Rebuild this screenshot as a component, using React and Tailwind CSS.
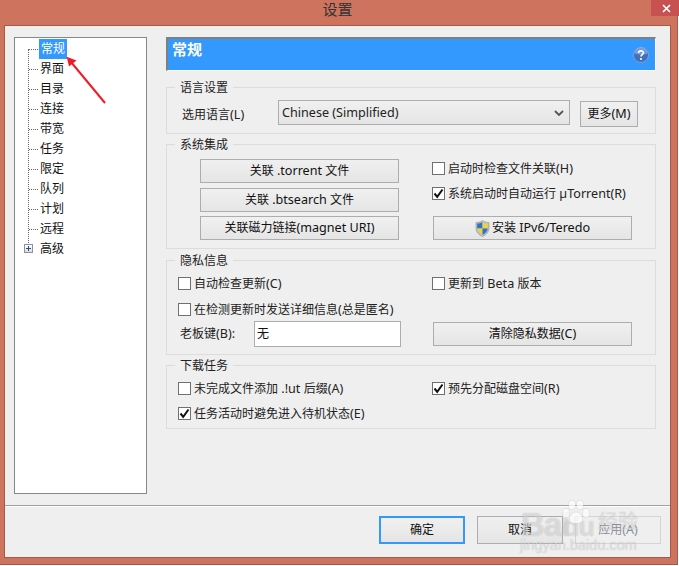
import React from "react";

const cjk = { fontFamily: '"Noto Sans", "Noto Sans CJK SC", sans-serif' };

function Txt({ children }) {
  const parts = String(children).split(/([\u0000-\u024F]+)/).filter(Boolean);
  return (
    <span className="whitespace-pre inline-block">
      {parts.map((p, i) =>
        /^[\u0000-\u024F]+$/.test(p) ? (
          <span key={i} className="text-[12.6px]">{p}</span>
        ) : (
          <span key={i}>{p}</span>
        )
      )}
    </span>
  );
}

function Btn({ className = "", children }) {
  return (
    <div className={"flex items-center justify-center gap-0.5 border bg-gradient-to-b text-[12px] leading-none " + className}>
      {children}
    </div>
  );
}

const stdBtn = "h-6 w-[199px] border-[#adadad] from-[#f0f0f0] to-[#e5e5e5] text-[#111]";

function Check({ checked, label, className = "" }) {
  return (
    <div className={"flex items-center gap-[3px] h-[13px] text-[12px] leading-none text-[#222] whitespace-nowrap " + className}>
      <span className="w-[13px] h-[13px] border border-[#707070] bg-white flex items-center justify-center shrink-0">
        {checked && (
          <svg width="11" height="11" viewBox="0 0 11 11">
            <path d="M1.5 5.5 L4.2 8.8 L9.5 1.5" fill="none" stroke="#111" strokeWidth="2" />
          </svg>
        )}
      </span>
      <span className="mt-[1px]"><Txt>{label}</Txt></span>
    </div>
  );
}

function Group({ title, className = "", children }) {
  return (
    <div className={"relative border border-[#dcdcdc] " + className}>
      <span className="absolute left-[8px] top-[-7px] bg-[#efefef] px-[5px] text-[12px] leading-[14px] text-[#222]">{title}</span>
      {children}
    </div>
  );
}

const treeItems = ["界面", "目录", "连接", "带宽", "任务", "限定", "队列", "计划", "远程"];

function Tree() {
  return (
    <div className="w-[133px] h-[457px] border border-[#828790] bg-white text-[12px] leading-none text-[#111] shrink-0 pt-[1px] pl-[23px]">
      <div className="relative">
        <span className="absolute left-[-10px] top-[10px] h-[200px] border-l border-dotted border-[#666]" />
        <div className="flex items-center h-5">
          <span className="w-[9px] border-t border-dotted border-[#666] -ml-[9px] mr-[1px]" />
          <span className="bg-[#3399ff] text-white h-5 w-[28px] flex items-center justify-center"><Txt>常规</Txt></span>
        </div>
        {treeItems.map((t) => (
          <div key={t} className="flex items-center h-5">
            <span className="w-[9px] border-t border-dotted border-[#666] -ml-[9px] mr-[2px]" />
            <Txt>{t}</Txt>
          </div>
        ))}
        <div className="flex items-center h-5 relative">
          <span className="absolute left-[-14px] top-[5px] w-[9px] h-[9px] border border-[#919191] bg-gradient-to-b from-white to-[#dcdcdc] flex items-center justify-center">
            <svg width="7" height="7" viewBox="0 0 7 7"><path d="M1 3.5H6M3.5 1V6" stroke="#2f4a8c" strokeWidth="1" /></svg>
          </span>
          <span className="ml-[2px]"><Txt>高级</Txt></span>
        </div>
      </div>
    </div>
  );
}

function Shield() {
  return (
    <svg width="15" height="17" viewBox="0 0 15 17">
      <path d="M7.5 0.5 C5.5 2 3 2.5 1 2.5 V8 C1 12 4 15 7.5 16.5 C11 15 14 12 14 8 V2.5 C12 2.5 9.5 2 7.5 0.5Z" fill="#b9c0c6" stroke="#8a949c" strokeWidth="0.6" />
      <path d="M7.5 2 V8.5 H2.2 V3.6 C4 3.5 6 3 7.5 2Z" fill="#2a74c9" />
      <path d="M7.5 2 V8.5 H12.8 V3.6 C11 3.5 9 3 7.5 2Z" fill="#f6cf3c" />
      <path d="M2.3 8.5 H7.5 V14.8 C4.8 13.5 2.6 11.5 2.3 8.5Z" fill="#f6cf3c" />
      <path d="M12.7 8.5 H7.5 V14.8 C10.2 13.5 12.4 11.5 12.7 8.5Z" fill="#2a74c9" />
    </svg>
  );
}

function Help() {
  return (
    <svg width="16" height="16" viewBox="0 0 16 16">
      <circle cx="8" cy="8" r="7.5" fill="#3f6fbd" stroke="#7f9fd6" />
      <path d="M1.5 6.5 A6.5 6.5 0 0 1 14.5 6.5 C11 8 5 8 1.5 6.5Z" fill="#8fb0e4" opacity="0.7" />
      <path d="M5.6 6 C5.6 3.2 10.4 3.2 10.4 5.8 C10.4 7.6 8 7.6 8 9.6" fill="none" stroke="#fff" strokeWidth="1.6" />
      <circle cx="8" cy="12" r="1.1" fill="#fff" />
    </svg>
  );
}

export default function App() {
  return (
    <div className="relative w-[679px] h-[566px] overflow-hidden bg-white" style={cjk}>
      <div className="flex flex-col w-[678px] h-[565px] bg-[#cd735e] border-b border-r border-[#a85a48]">
        {/* title bar */}
        <div className="relative h-[25px] shrink-0 w-[675px] flex justify-center pt-[2px]">
          <span className="text-[15px] leading-none text-[#333]">设置</span>
          <div className="absolute right-[-7px] top-0 w-[31px] h-[16px] bg-[#c75050] flex items-center justify-center">
            <svg width="9" height="9" viewBox="0 0 9 9"><path d="M1 1L8 8M8 1L1 8" stroke="#fff" strokeWidth="1.7" /></svg>
          </div>
        </div>
        {/* client */}
        <div className="ml-[4px] w-[667px] h-[533px] border border-[#a85a48] bg-[#efefef] flex flex-col shrink-0">
          <div className="flex h-[479px] pl-[9px] pt-[11px] gap-[19px]">
            <Tree />
            <div className="w-[490px] flex flex-col">
              <div className="h-[34px] border-t-2 border-l-2 border-t-[#808080] border-l-[#808080] border-b border-r border-b-white border-r-white bg-[#3399ff] flex items-center justify-between pl-[4px] pr-[6px]">
                <span className="text-[15px] font-bold leading-none text-white -mt-[11px]">常规</span>
                <span className="mt-[1px]"><Help /></span>
              </div>

              <Group title="语言设置" className="h-[47px] mt-[16px] flex items-start pl-[15px] pt-[12px]">
                <span className="text-[12px] leading-none text-[#222] w-[96px] mt-[9px]"><Txt>选用语言(L)</Txt></span>
                <div className="w-[292px] h-[25px] border border-[#adadad] bg-gradient-to-b from-[#f0f0f0] to-[#e5e5e5] flex items-center justify-between pl-[3px] pr-[5px] text-[12px] leading-none text-[#222]">
                  <span className="mt-[1px]"><Txt>Chinese (Simplified)</Txt></span>
                  <svg width="10" height="6" viewBox="0 0 10 6"><path d="M1 1L5 5L9 1" fill="none" stroke="#555" strokeWidth="1.8" /></svg>
                </div>
                <Btn className="w-[58px] h-[26px] ml-[10px] mt-[1px] border-[#adadad] from-[#f0f0f0] to-[#e5e5e5] text-[#111]"><Txt>更多(M)</Txt></Btn>
              </Group>

              <Group title="系统集成" className="h-[105px] mt-[10px] pl-[33px] pt-[14px] flex">
                <div className="w-[232px] flex flex-col">
                  <Btn className={stdBtn}><Txt>关联 .torrent 文件</Txt></Btn>
                  <Btn className={stdBtn + " mt-[5px]"}><Txt>关联 .btsearch 文件</Txt></Btn>
                  <Btn className={stdBtn + " mt-[4px]"}><Txt>关联磁力链接(magnet URI)</Txt></Btn>
                </div>
                <div className="flex flex-col pt-[3px]">
                  <Check label="启动时检查文件关联(H)" />
                  <Check checked label="系统启动时自动运行 µTorrent(R)" className="mt-[12px]" />
                  <Btn className={stdBtn + " mt-[16px] ml-[1px]"}><Shield /><Txt>安装 IPv6/Teredo</Txt></Btn>
                </div>
              </Group>

              <Group title="隐私信息" className="h-[95px] mt-[11px] pl-[11px] pt-[16px]">
                <div className="flex">
                  <Check label="自动检查更新(C)" className="w-[254px]" />
                  <Check label="更新到 Beta 版本" />
                </div>
                <Check label="在检测更新时发送详细信息(总是匿名)" className="mt-[13px]" />
                <div className="flex items-center mt-[5px]">
                  <span className="text-[12px] leading-none text-[#222] w-[76px] pl-[2px]"><Txt>老板键(B):</Txt></span>
                  <div className="w-[147px] h-[26px] border border-[#abadb3] bg-white flex items-center pl-[2px] text-[12px] leading-none text-[#111]"><Txt>无</Txt></div>
                  <Btn className={stdBtn + " ml-[32px]"}><Txt>清除隐私数据(C)</Txt></Btn>
                </div>
              </Group>

              <Group title="下载任务" className="h-[64px] mt-[10px] pl-[11px] pt-[16px]">
                <div className="flex">
                  <Check label="未完成文件添加 .!ut 后缀(A)" className="w-[254px]" />
                  <Check checked label="预先分配磁盘空间(R)" />
                </div>
                <Check checked label="任务活动时避免进入待机状态(E)" className="mt-[12px]" />
              </Group>
            </div>
          </div>
          <div className="flex-1 border-t border-t-[#a0a0a0] shadow-[inset_0_1px_0_#fff] flex justify-end items-start gap-[12px] pt-[10px] pr-[9px]">
            <Btn className="w-[86px] h-[28px] border-2 border-[#3399ff] from-[#f0f0f0] to-[#e5e5e5] text-[#111]"><Txt>确定</Txt></Btn>
            <Btn className="w-[86px] h-[28px] border-[#adadad] from-[#f0f0f0] to-[#e5e5e5] text-[#111]"><Txt>取消</Txt></Btn>
            <Btn className="w-[86px] h-[28px] text-[#8a8f9a] border-[#d5d5d5] from-[#efefef] to-[#efefef]"><Txt>应用(A)</Txt></Btn>
          </div>
        </div>
      </div>

      {/* red annotation arrow */}
      <svg className="absolute left-[60px] top-[50px]" width="50" height="60" viewBox="0 0 50 60">
        <path d="M45 53 L11 12" stroke="#ee1c25" strokeWidth="2" fill="none" />
        <path d="M6.7 6.7 L16.5 10.5 L9 16.5Z" fill="#ee1c25" />
      </svg>

      {/* Baidu watermark laid over the buttons */}
      <div className="absolute left-[520px] top-[500px] w-[122px] h-[52px] pointer-events-none text-white/50 [text-shadow:0_0_1px_rgba(0,0,0,0.25)]">
        <span className="absolute left-[1px] top-[7px] text-[33px] leading-[36px] font-bold tracking-[-1px]" style={{ fontFamily: '"Liberation Sans", sans-serif' }}>Bai</span>
        <span className="absolute left-[43px] top-[12px] text-[27px] leading-[30px] font-bold tracking-[-1px]" style={{ fontFamily: '"Liberation Sans", sans-serif' }}>du</span>
        <svg className="absolute left-[41px] top-0" width="30" height="24" viewBox="0 0 30 24">
          <g fill="#fff" fillOpacity="0.7" stroke="#000" strokeOpacity="0.12" strokeWidth="0.6">
            <ellipse cx="5" cy="13" rx="3.5" ry="4.5" />
            <ellipse cx="11" cy="5" rx="3.5" ry="4.5" />
            <ellipse cx="19" cy="5" rx="3.5" ry="4.5" />
            <ellipse cx="25" cy="13" rx="3.5" ry="4.5" />
            <path d="M15 12 C11 12 7 18 9 22 C11 24 19 24 21 22 C23 18 19 12 15 12Z" />
          </g>
        </svg>
        <span className="absolute left-[78px] top-[11px] text-[20px] leading-[22px]">经验</span>
        <span className="absolute left-0 top-[38px] text-[14.5px] leading-[14px] whitespace-nowrap" style={{ fontFamily: '"Liberation Sans", sans-serif' }}>jingyan.baidu.com</span>
      </div>
    </div>
  );
}
